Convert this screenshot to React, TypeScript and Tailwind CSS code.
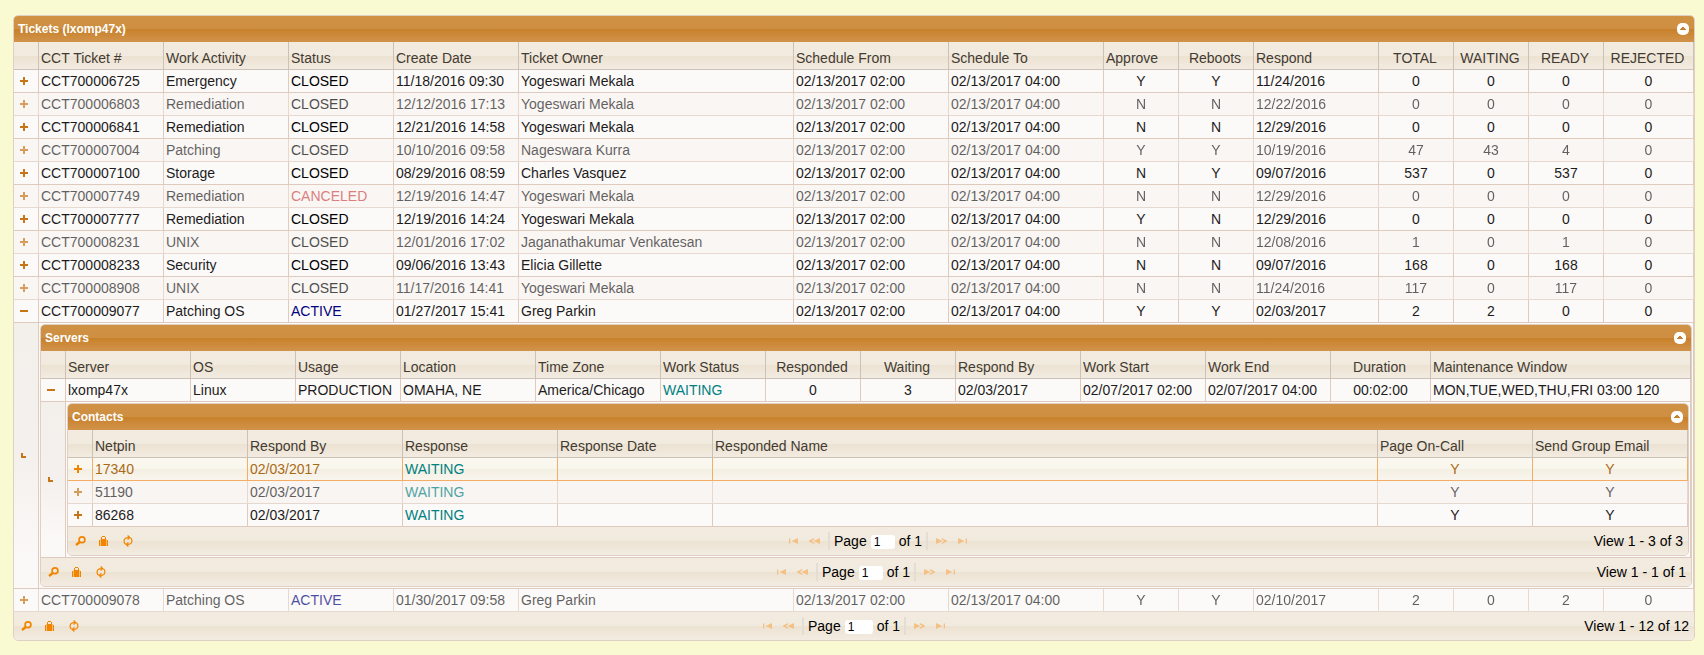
import React from "react";

type Align = "left" | "center";
type Column = { label: string; width: string; align?: Align; headAlign?: Align };
type Tone = "normal" | "muted" | "active";

const STATUS_COLORS: Record<string, string> = {
  CLOSED: "text-black",
  CANCELED: "text-[#cc4a4a]",
  ACTIVE: "text-[#000080]",
  WAITING: "text-[#008080]",
};

const ticketColumns: Column[] = [
  { label: "CCT Ticket #", width: "w-[125px]" },
  { label: "Work Activity", width: "w-[125px]" },
  { label: "Status", width: "w-[105px]" },
  { label: "Create Date", width: "w-[125px]" },
  { label: "Ticket Owner", width: "w-auto" },
  { label: "Schedule From", width: "w-[155px]" },
  { label: "Schedule To", width: "w-[155px]" },
  { label: "Approve", width: "w-[75px]", align: "center", headAlign: "left" },
  { label: "Reboots", width: "w-[75px]", align: "center" },
  { label: "Respond", width: "w-[125px]" },
  { label: "TOTAL", width: "w-[75px]", align: "center" },
  { label: "WAITING", width: "w-[75px]", align: "center" },
  { label: "READY", width: "w-[75px]", align: "center" },
  { label: "REJECTED", width: "w-[90px]", align: "center" },
];

const serverColumns: Column[] = [
  { label: "Server", width: "w-[125px]" },
  { label: "OS", width: "w-[105px]" },
  { label: "Usage", width: "w-[105px]" },
  { label: "Location", width: "w-[135px]" },
  { label: "Time Zone", width: "w-[125px]" },
  { label: "Work Status", width: "w-[105px]" },
  { label: "Responded", width: "w-[95px]", align: "center" },
  { label: "Waiting", width: "w-[95px]", align: "center" },
  { label: "Respond By", width: "w-[125px]" },
  { label: "Work Start", width: "w-[125px]" },
  { label: "Work End", width: "w-[125px]" },
  { label: "Duration", width: "w-[100px]", align: "center" },
  { label: "Maintenance Window", width: "w-auto" },
];

const contactColumns: Column[] = [
  { label: "Netpin", width: "w-[155px]" },
  { label: "Respond By", width: "w-[155px]" },
  { label: "Response", width: "w-[155px]" },
  { label: "Response Date", width: "w-[155px]" },
  { label: "Responded Name", width: "w-auto" },
  { label: "Page On-Call", width: "w-[155px]", align: "center", headAlign: "left" },
  { label: "Send Group Email", width: "w-[155px]", align: "center", headAlign: "left" },
];

const FROM = "02/13/2017 02:00";
const TO = "02/13/2017 04:00";

const tickets: string[][] = [
  ["CCT700006725", "Emergency", "CLOSED", "11/18/2016 09:30", "Yogeswari Mekala", FROM, TO, "Y", "Y", "11/24/2016", "0", "0", "0", "0"],
  ["CCT700006803", "Remediation", "CLOSED", "12/12/2016 17:13", "Yogeswari Mekala", FROM, TO, "N", "N", "12/22/2016", "0", "0", "0", "0"],
  ["CCT700006841", "Remediation", "CLOSED", "12/21/2016 14:58", "Yogeswari Mekala", FROM, TO, "N", "N", "12/29/2016", "0", "0", "0", "0"],
  ["CCT700007004", "Patching", "CLOSED", "10/10/2016 09:58", "Nageswara Kurra", FROM, TO, "Y", "Y", "10/19/2016", "47", "43", "4", "0"],
  ["CCT700007100", "Storage", "CLOSED", "08/29/2016 08:59", "Charles Vasquez", FROM, TO, "N", "Y", "09/07/2016", "537", "0", "537", "0"],
  ["CCT700007749", "Remediation", "CANCELED", "12/19/2016 14:47", "Yogeswari Mekala", FROM, TO, "N", "N", "12/29/2016", "0", "0", "0", "0"],
  ["CCT700007777", "Remediation", "CLOSED", "12/19/2016 14:24", "Yogeswari Mekala", FROM, TO, "Y", "N", "12/29/2016", "0", "0", "0", "0"],
  ["CCT700008231", "UNIX", "CLOSED", "12/01/2016 17:02", "Jaganathakumar Venkatesan", FROM, TO, "N", "N", "12/08/2016", "1", "0", "1", "0"],
  ["CCT700008233", "Security", "CLOSED", "09/06/2016 13:43", "Elicia Gillette", FROM, TO, "N", "N", "09/07/2016", "168", "0", "168", "0"],
  ["CCT700008908", "UNIX", "CLOSED", "11/17/2016 14:41", "Yogeswari Mekala", FROM, TO, "N", "N", "11/24/2016", "117", "0", "117", "0"],
  ["CCT700009077", "Patching OS", "ACTIVE", "01/27/2017 15:41", "Greg Parkin", FROM, TO, "Y", "Y", "02/03/2017", "2", "2", "0", "0"],
];

const lastTicket = ["CCT700009078", "Patching OS", "ACTIVE", "01/30/2017 09:58", "Greg Parkin", FROM, TO, "Y", "Y", "02/10/2017", "2", "0", "2", "0"];

const server = ["lxomp47x", "Linux", "PRODUCTION", "OMAHA, NE", "America/Chicago", "WAITING", "0", "3", "02/03/2017", "02/07/2017 02:00", "02/07/2017 04:00", "00:02:00", "MON,TUE,WED,THU,FRI 03:00 120"];

const contacts: { cells: string[]; tone: Tone }[] = [
  { cells: ["17340", "02/03/2017", "WAITING", "", "", "Y", "Y"], tone: "active" },
  { cells: ["51190", "02/03/2017", "WAITING", "", "", "Y", "Y"], tone: "muted" },
  { cells: ["86268", "02/03/2017", "WAITING", "", "", "Y", "Y"], tone: "normal" },
];

const BAR = "bg-[linear-gradient(#f3ebe0_0%,#f1eadf_50%,#ece2d2_50%,#f3ece2_100%)]";

function PlusIcon({ minus = false }: { minus?: boolean }) {
  return (
    <svg width="8" height="8" viewBox="0 0 8 8" fill="currentColor" shapeRendering="crispEdges" aria-hidden="true">
      <path d="M0 3h8v2H0z" />
      {!minus && <path d="M3 0h2v8H3z" />}
    </svg>
  );
}

function SearchIcon() {
  return (
    <svg width="11" height="10" viewBox="0 0 11 10" fill="none" stroke="currentColor" aria-hidden="true">
      <circle cx="7" cy="3.8" r="2.9" strokeWidth="1.7" />
      <path d="M4.8 6L1 9" strokeWidth="2.3" />
    </svg>
  );
}

function SuitcaseIcon() {
  return (
    <svg width="9" height="10" viewBox="0 0 9 10" fill="currentColor" shapeRendering="crispEdges" aria-hidden="true">
      <path d="M3 0h3v1H3zM2 1h1v2H2zM6 1h1v2H6zM0 4h1v6H0zM2 3h5v7H2zM8 4h1v6H8z" />
      <path d="M1 3h1v7H1zM7 3h1v7H7z" fillOpacity="0.4" />
    </svg>
  );
}

function RefreshIcon() {
  return (
    <svg width="14" height="12" viewBox="0 0 14 12" fill="none" stroke="currentColor" strokeWidth="1.2" aria-hidden="true">
      <path d="M4.6 9.3A4 4 0 0 1 4 3.6C4.8 2.8 6 2.6 8.4 2.6" />
      <path d="M6.6 0.5L8.7 2.6L6.6 4.7" />
      <path d="M9.4 2.7A4 4 0 0 1 10 8.4C9.2 9.2 8 9.4 5.6 9.4" />
      <path d="M7.4 7.3L5.3 9.4L7.4 11.5" />
    </svg>
  );
}

function FirstIcon({ flip = false }: { flip?: boolean }) {
  return (
    <svg width="9" height="6" viewBox="0 0 9 6" fill="currentColor" aria-hidden="true" className={flip ? "rotate-180" : ""}>
      <path d="M0 0.5h1.3v5H0zM9 0v6L2.6 3z" />
    </svg>
  );
}

function PrevIcon({ flip = false }: { flip?: boolean }) {
  return (
    <svg width="11" height="6" viewBox="0 0 11 6" fill="currentColor" aria-hidden="true" className={flip ? "rotate-180" : ""}>
      <path d="M11 0v6L4.6 3zM5.2 0v1.6L2.6 3l2.6 1.4V6L0 3.4v-0.8z" />
    </svg>
  );
}

function CollapseIcon() {
  return (
    <svg width="12" height="12" viewBox="0 0 12 12" aria-hidden="true">
      <rect width="12" height="12" rx="5" fill="#fff" />
      <path d="M3 7h6V6H8V5H7V4H5v1H4v1H3z" fill="#c77f2b" shapeRendering="crispEdges" />
    </svg>
  );
}

function Pager({ id, view, inputWidth }: { id: string; view: string; inputWidth: string }) {
  return (
    <footer className={`grid h-[28px] grid-cols-[1fr_auto_1fr] items-center rounded-b-[4px] leading-4 text-black ${BAR}`}>
      <div className="flex items-center gap-[13px] pl-[7px] text-[#f28500]">
        <button type="button" aria-label="Find records"><SearchIcon /></button>
        <button type="button" aria-label="Manage records"><SuitcaseIcon /></button>
        <button type="button" aria-label="Reload grid"><RefreshIcon /></button>
      </div>
      <div className="flex items-center">
        <div className="flex gap-[11px] pr-2 text-[#f4c084]">
          <button type="button" aria-label="First page" disabled><FirstIcon /></button>
          <button type="button" aria-label="Previous page" disabled><PrevIcon /></button>
        </div>
        <div className="flex h-[18px] items-center gap-1 border-x-2 border-[#e3ddd4] px-1">
          <label htmlFor={id}>Page</label>
          <input id={id} defaultValue="1" className={`mt-[2px] h-[14px] rounded-[3px] bg-white px-[3px] text-[12px] leading-[14px] outline-none ${inputWidth}`} />
          <span>of 1</span>
        </div>
        <div className="flex gap-[11px] pl-2 text-[#f4c084]">
          <button type="button" aria-label="Next page" disabled><PrevIcon flip /></button>
          <button type="button" aria-label="Last page" disabled><FirstIcon flip /></button>
        </div>
      </div>
      <div className="pr-[5px] text-right">{view}</div>
    </footer>
  );
}

const TONES: Record<Tone, { row: string; cell: string; icon: string }> = {
  normal: { row: "bg-[#fbfaf8] text-[#1e1b1d]", cell: "border-[#dfcabe]", icon: "text-[#c77519]" },
  muted: { row: "bg-[#fbfaf8] text-[#1e1b1d] opacity-70", cell: "border-[#dfcabe]", icon: "text-[#c77519]" },
  active: {
    row: "bg-[linear-gradient(#faf8f1_0%,#f9f6ec_50%,#f4efe3_50%,#f9f6ef_100%)] text-[#a96a17]",
    cell: "border-[#f5ad66]",
    icon: "text-[#f28500]",
  },
};

type RowProps = { columns: Column[]; cells: string[]; tone: Tone; tint?: boolean; open?: boolean };

function Row({ columns, cells, tone, tint = false, open = false }: RowProps) {
  const t = TONES[tone];
  return (
    <tr className={tint ? "bg-[#f9f4f1] text-[#1e1b1d] opacity-70" : t.row}>
      <td className={`h-[23px] border-b border-r p-0 ${t.cell} ${t.icon}`}>
        <button type="button" aria-label={open ? "Collapse row" : "Expand row"} aria-expanded={open} className="flex h-full w-full items-center pl-[6px]">
          <PlusIcon minus={open} />
        </button>
      </td>
      {cells.map((value, i) => (
        <td
          key={i}
          className={`h-[23px] overflow-hidden whitespace-nowrap border-b border-r px-[2px] py-0 ${t.cell} ${columns[i].align === "center" ? "text-center" : "text-left"} ${STATUS_COLORS[value] ?? ""}`}
        >
          {value}
        </td>
      ))}
    </tr>
  );
}

function SubRow({ span, children }: { span: number; children: React.ReactNode }) {
  return (
    <tr className="bg-[#fbfaf8]">
      <td className="border-b border-r border-[#dfcabe] bg-[linear-gradient(#f3efeb_0%,#f4f0ed_50%,#fbf9f8_90%)] p-0 pl-[7px] align-middle text-[#c77519]">
        <svg width="5" height="5" viewBox="0 0 5 5" fill="currentColor" shapeRendering="crispEdges" aria-hidden="true">
          <path d="M0 0h2v3h3v2H0z" />
        </svg>
      </td>
      <td colSpan={span} className="border-b border-r border-[#dfcabe] p-px">{children}</td>
    </tr>
  );
}

type GridProps = {
  title: string;
  columns: Column[];
  children: React.ReactNode;
  id: string;
  view: string;
  inputWidth: string;
};

function Grid({ title, columns, children, id, view, inputWidth }: GridProps) {
  return (
    <section className="rounded-[5px] border border-[#dfcfc4] bg-[#fbfaf8]">
      <header className="flex h-[26px] items-center justify-between rounded-t-[4px] bg-[linear-gradient(#cf9144_0%,#ce8f42_50%,#c8812a_50%,#d1934b_100%)] pl-1 pr-[5px] text-white">
        <h2 className="text-[12px] font-bold leading-[16px]">{title}</h2>
        <button type="button" aria-label={`Collapse ${title}`}><CollapseIcon /></button>
      </header>
      <table className="w-full table-fixed border-separate border-spacing-0">
        <colgroup>
          <col className="w-[25px]" />
          {columns.map((c) => <col key={c.label} className={c.width} />)}
        </colgroup>
        <thead>
          <tr className={`text-[#433b32] ${BAR}`}>
            <th aria-label="Details" className="h-[28px] border-b border-r border-[#cbc1b6] p-0" />
            {columns.map((c) => (
              <th
                key={c.label}
                scope="col"
                className={`h-[28px] overflow-hidden whitespace-nowrap border-b border-r border-[#cbc1b6] pb-0 pl-[2px] pt-[5px] font-normal ${(c.headAlign ?? c.align) === "center" ? "pr-1 text-center" : "pr-[2px] text-left"}`}
              >
                {c.label}
              </th>
            ))}
          </tr>
        </thead>
        <tbody>{children}</tbody>
      </table>
      <Pager id={id} view={view} inputWidth={inputWidth} />
    </section>
  );
}

export default function App() {
  return (
    <main className="min-h-screen bg-[#fafad2] pb-[14px] pl-[13px] pr-[9px] pt-[15px] font-['Liberation_Sans',Arial,sans-serif] text-[14px] leading-4">
      <Grid title="Tickets (lxomp47x)" columns={ticketColumns} id="tickets-page" view="View 1 - 12 of 12" inputWidth="w-[28px]">
        {tickets.map((cells, i) => (
          <Row key={cells[0]} columns={ticketColumns} cells={cells} tone={i % 2 ? "muted" : "normal"} tint={i % 2 === 1} open={i === tickets.length - 1} />
        ))}
        <SubRow span={ticketColumns.length}>
          <Grid title="Servers" columns={serverColumns} id="servers-page" view="View 1 - 1 of 1" inputWidth="w-[24px]">
            <Row columns={serverColumns} cells={server} tone="normal" open />
            <SubRow span={serverColumns.length}>
              <Grid title="Contacts" columns={contactColumns} id="contacts-page" view="View 1 - 3 of 3" inputWidth="w-[24px]">
                {contacts.map((c) => (
                  <Row key={c.cells[0]} columns={contactColumns} cells={c.cells} tone={c.tone} tint={c.tone === "muted"} />
                ))}
              </Grid>
            </SubRow>
          </Grid>
        </SubRow>
        <Row columns={ticketColumns} cells={lastTicket} tone="muted" />
      </Grid>
    </main>
  );
}
